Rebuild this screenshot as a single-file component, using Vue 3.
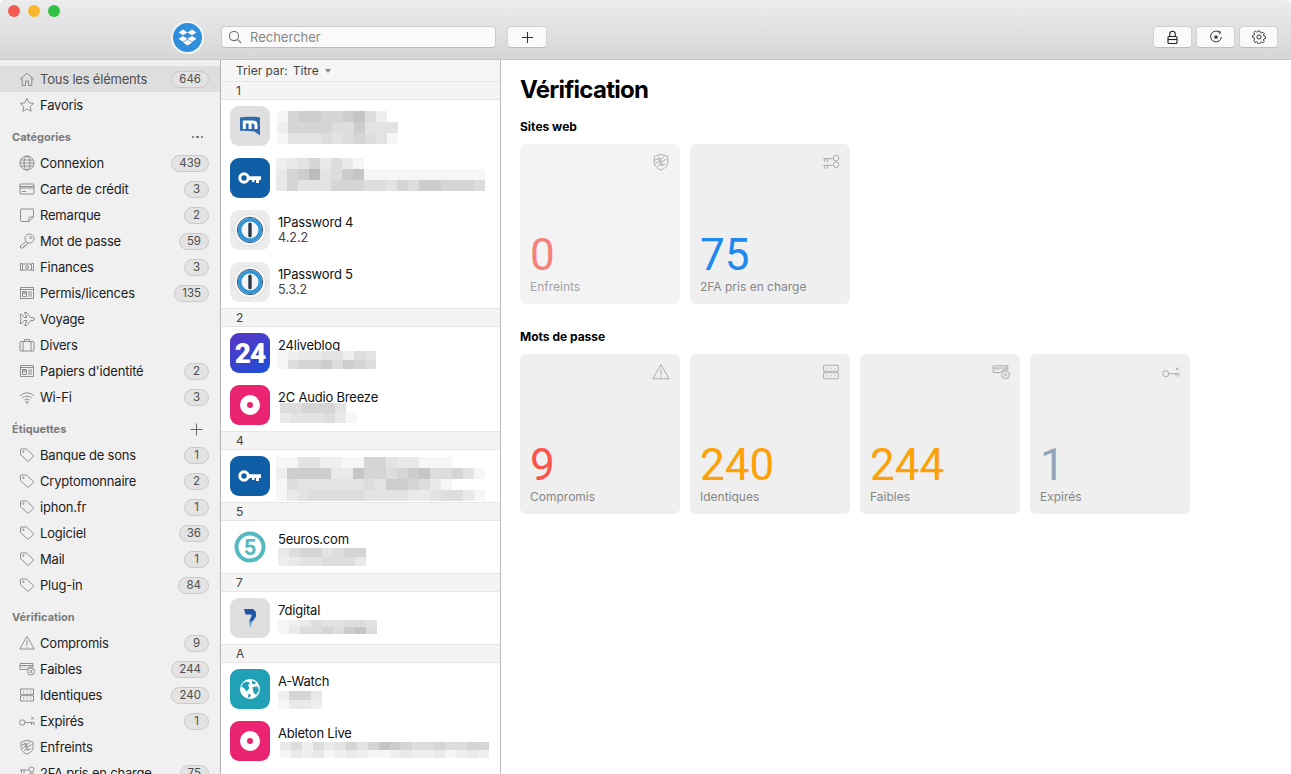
<template>
  <div class="window">
    <!-- Barre d'outils -->
    <header class="toolbar">
      <div class="lights">
        <span class="light light--red"></span>
        <span class="light light--yellow"></span>
        <span class="light light--green"></span>
      </div>
      <div class="controls">
        <div class="vault">
          <svg width="19" height="17" viewBox="0 0 19 17" fill="#fff">
            <path d="M5 0.5 9.5 3.4 5 6.3 0.5 3.4zM14 0.5 18.5 3.4 14 6.3 9.5 3.4zM5 6.9 9.5 9.8 5 12.7 0.5 9.8zM14 6.9 18.5 9.8 14 12.7 9.5 9.8zM5 13.6 9.5 10.8 14 13.6 9.5 16.5z" />
          </svg>
        </div>
        <div class="search">
          <svg width="14" height="14" viewBox="0 0 14 14" fill="none" stroke="#777" stroke-width="1.1">
            <circle cx="6" cy="6" r="4.6" />
            <path d="M9.4 9.4 13 13" />
          </svg>
          <span>Rechercher</span>
        </div>
        <button class="tool-btn tool-btn--add">
          <svg width="13" height="13" viewBox="0 0 13 13" stroke="#333" stroke-width="1.1"><path d="M6.5 1v11M1 6.5h11" /></svg>
        </button>
        <div class="spacer"></div>
        <button class="tool-btn">
          <svg width="13" height="14" viewBox="0 0 13 14" fill="none" stroke="#222" stroke-width="1.1">
            <rect x="2" y="6.5" width="9" height="7" rx="1" />
            <path d="M3.8 6.5V4a2.7 2.7 0 0 1 5.4 0v2.5" />
            <path d="M2 9.5h9" />
          </svg>
        </button>
        <button class="tool-btn">
          <svg width="14" height="14" viewBox="0 0 14 14" fill="none" stroke="#333" stroke-width="1">
            <path d="M10.8 2.6A5.4 5.4 0 1 0 12.4 7" />
            <path d="M9.6 1 11.6 2.2 10.2 4.2" />
            <path d="M7 4.4 7.8 6.2 9.6 6.3 8.2 7.5 8.7 9.3 7 8.3 5.3 9.3 5.8 7.5 4.4 6.3 6.2 6.2z" fill="#333" stroke="none" />
          </svg>
        </button>
        <button class="tool-btn">
          <svg width="14" height="14" viewBox="0 0 14 14" fill="none" stroke="#333" stroke-width="1">
            <circle cx="7" cy="7" r="2.1" />
            <path d="M5.9 1h2.2l.4 1.7 1.2.5 1.5-.9 1.5 1.5-.9 1.5.5 1.2 1.7.4v2.2l-1.7.4-.5 1.2.9 1.5-1.5 1.5-1.5-.9-1.2.5-.4 1.7H5.9l-.4-1.7-1.2-.5-1.5.9L1.3 11l.9-1.5-.5-1.2L0 7.9V5.7l1.7-.4.5-1.2-.9-1.5 1.5-1.5 1.5.9 1.2-.5z" transform="translate(.6 .1) scale(.92)" />
          </svg>
        </button>
      </div>
    </header>

    <div class="main">
      <!-- Barre latérale -->
      <aside class="sidebar">
        <section v-for="section in sidebar" :key="section.title" class="side-section">
          <div v-if="section.title !== 'top'" class="side-title">
            <span>{{ section.title }}</span>
            <span v-if="section.action === 'dots'" class="side-dots">
              <i></i><i></i><i></i>
            </span>
            <svg v-if="section.action === 'plus'" width="13" height="13" viewBox="0 0 13 13" stroke="#666" stroke-width="1"><path d="M6.5 0.5v12M0.5 6.5h12" /></svg>
          </div>
          <div
            v-for="row in section.rows"
            :key="row.label"
            class="side-row"
            :class="{ 'side-row--active': row.active }"
          >
            <svg class="side-icon" width="16" height="16" viewBox="0 0 16 16" fill="none" stroke="#7d7d7d" stroke-width="0.85" stroke-linejoin="round">
              <path v-for="d in icons[row.icon]" :key="d" :d="d" />
            </svg>
            <span class="side-label">{{ row.label }}</span>
            <span v-if="row.count" class="side-badge">{{ row.count }}</span>
          </div>
        </section>
      </aside>

      <!-- Liste des éléments -->
      <div class="list">
        <div class="sort">
          <span>Trier par:</span>
          <span class="sort-value">Titre</span>
          <i class="sort-caret"></i>
        </div>
        <template v-for="group in groups" :key="group.letter">
          <div class="group-head">{{ group.letter }}</div>
          <div v-for="(item, idx) in group.items" :key="idx" class="item">
            <div class="app-icon" :class="'app-icon--' + item.icon">
              <svg v-if="item.icon === 'mail'" width="22" height="22" viewBox="0 0 22 22">
                <path d="M1 2.500C7 1.500 15 1.500 21 2.500V20.500L15.500 16.500C11 16 6 15.800 1 15.800z" fill="#2f69ae" />
                <path d="M5.300 14V7H13.500C15.500 7 17 8.200 17 10V14M11.100 7V14" fill="none" stroke="#fff" stroke-width="3" />
              </svg>
              <svg v-else-if="item.icon === 'key'" width="24" height="14" viewBox="0 0 24 14">
                <circle cx="6" cy="7" r="4.200" fill="none" stroke="#fff" stroke-width="3" />
                <path d="M10 5.300H23V9H21V12H18V9H16.500V11H14V9H10z" fill="#fff" />
              </svg>
              <svg v-else-if="item.icon === 'onepass'" width="40" height="40" viewBox="0 0 40 40">
                <path d="M0 20H40" stroke="#d8d8d8" stroke-width="1" />
                <circle cx="20" cy="20" r="16" fill="#f8f8f8" stroke="#d4d4d4" stroke-width="0.800" />
                <circle cx="20" cy="20" r="12.700" fill="none" stroke="#3b5269" stroke-width="1" />
                <circle cx="20" cy="20" r="10.300" fill="#f4f4f4" stroke="#2f96d8" stroke-width="3.600" />
                <rect x="18.300" y="12.500" width="3.400" height="15" rx="1.700" fill="#2b3a47" />
              </svg>
              <span v-else-if="item.icon === 'num'">24</span>
              <span v-else-if="item.icon === 'disc'" class="disc"></span>
              <svg v-else-if="item.icon === 'five'" width="36" height="36" viewBox="0 0 36 36">
                <circle cx="18" cy="18" r="13.500" fill="none" stroke="#55b9c2" stroke-width="4" />
                <text x="18" y="25.500" text-anchor="middle" font-family="Roboto, sans-serif" font-weight="700" font-size="22" fill="#55b9c2">5</text>
              </svg>
              <svg v-else-if="item.icon === 'seven'" width="14" height="20" viewBox="0 0 14 20">
                <path d="M1 1H10L13 4V8.500L9.500 13.500H6L8.500 8V6.500H2.500z" fill="#1f56a8" />
                <path d="M6 13.500H9.500L7 19.500z" fill="#5ba4d8" />
              </svg>
              <svg v-else-if="item.icon === 'globe'" width="22" height="22" viewBox="0 0 22 22">
                <circle cx="11" cy="11" r="10" fill="#fff" />
                <path d="M4 5 8 3.500 11 5 9 7.500 10.500 10 7.500 13.500 5 10 2.500 8.500zM13 2.500 17 4.500 15.500 6.500 13 5.500zM13.500 9 18.500 8.500 20 12 17 17 14.500 14.500zM9.500 15.500 12 17 10.500 20 9 19z" fill="#22a0b5" />
              </svg>
            </div>
            <div class="item-text">
              <div v-if="item.title" class="item-title">{{ item.title }}</div>
              <div v-if="item.sub" class="item-sub">{{ item.sub }}</div>
              <div
                v-if="item.blur"
                class="blur"
                :style="{ marginLeft: item.bx + 'px', marginTop: item.by + 'px' }"
              >
                <div
                  v-for="(line, i) in item.blur"
                  :key="i"
                  class="blur-row"
                  :style="{ height: (item.bh || 11) + 'px' }"
                >
                  <span
                    v-for="(c, j) in line"
                    :key="j"
                    class="blur-cell"
                    :style="{ background: shade(c) }"
                  ></span>
                </div>
              </div>
            </div>
          </div>
        </template>
      </div>

      <!-- Vérification -->
      <main class="detail">
        <h1>Vérification</h1>
        <div v-for="block in blocks" :key="block.title" class="block">
          <h2>{{ block.title }}</h2>
          <div class="cards">
            <div
              v-for="card in block.cards"
              :key="card.label"
              class="card"
              :class="{ 'card--empty': card.empty }"
            >
              <svg class="card-icon" width="18" height="18" viewBox="0 0 16 16" fill="none" stroke="#a4a4a4" stroke-width="0.8" stroke-linejoin="round">
                <path v-for="d in icons[card.icon]" :key="d" :d="d" />
              </svg>
              <div class="card-num" :style="{ color: card.color }">{{ card.num }}</div>
              <div class="card-label">{{ card.label }}</div>
            </div>
          </div>
        </div>
      </main>
    </div>
  </div>
</template>

<script setup>
const icons = {
  home: ['M1 8.500 8 2l7 6.500', 'M3.200 6.800V14.500H6.500V10H9.500V14.500H12.800V6.800'],
  star: ['M8 1.500l2 4.300 4.600.6-3.400 3.200.9 4.700L8 12l-4.100 2.300.9-4.700L1.400 6.400 6 5.800z'],
  globe: ['M15 8A7 7 0 1 1 1 8 7 7 0 1 1 15 8z', 'M11 8A3 7 0 1 1 5 8 3 7 0 1 1 11 8z', 'M1.800 5H14.200', 'M1.800 11H14.200', 'M1 8H15'],
  card: ['M2 3H14Q15 3 15 4V12Q15 13 14 13H2Q1 13 1 12V4Q1 3 2 3z', 'M1 5.500H15', 'M1 7H15', 'M3 10.500H7'],
  note: ['M2.500 2H13.500Q14.500 2 14.500 3V10L10 14.500H2.500Q1.500 14.500 1.500 13.500V3Q1.500 2 2.500 2z', 'M14.500 10H11Q10 10 10 11V14.500'],
  key: ['M15 5.500A4.500 4.500 0 1 1 6 5.500 4.500 4.500 0 1 1 15 5.500z', 'M7 8.500 1.500 13V15H4L4.500 13.500H6L6 12H7.500L9 10', 'M12.600 4.500A1 1 0 1 1 10.600 4.500 1 1 0 1 1 12.600 4.500z'],
  money: ['M3.500 4.500H1.500V11.500H3.500', 'M12.500 4.500H14.500V11.500H12.500', 'M3.500 5H12.500V11H3.500z', 'M9.500 8A1.500 1.500 0 1 1 6.500 8 1.500 1.500 0 1 1 9.500 8z'],
  id: ['M1.500 2.500H14.500V13.500H1.500z', 'M1.500 4.500H14.500', 'M3.500 6.500H7.500V11.500H3.500z', 'M4.500 8a1 1 0 1 1 2 0 1 1 0 1 1-2 0', 'M9 7H13M9 9H13M9 11H13'],
  plane: ['M1 3.500H3L5 6.500H8L5.500 1.500H7.500L11.500 6.500H14Q15.500 7 15.500 8T14 9.500H11.500L7.500 14.500H5.500L8 9.500H5L3 12.500H1L2 8z'],
  case: ['M2 4.500H14Q15 4.500 15 5.500V13Q15 14 14 14H2Q1 14 1 13V5.500Q1 4.500 2 4.500z', 'M5.500 4.500V2.500H10.500V4.500', 'M4 4.500V14M12 4.500V14'],
  wifi: ['M1 6.800C5 3 11 3 15 6.800', 'M3.200 9C6 6.600 10 6.600 12.800 9', 'M5.400 11C7 9.800 9 9.800 10.600 11', 'M9 13.200A1 1 0 1 1 7 13.200 1 1 0 1 1 9 13.200z'],
  tag: ['M1.500 2.500Q1.500 2 2.500 2H7.500L14.500 8.500Q15 9 14.500 9.500L9.500 14Q9 14.500 8.500 14L1.500 7.500z', 'M5 4.700A.7 .7 0 1 1 3.600 4.700 .7 .7 0 1 1 5 4.700z'],
  warn: ['M8 1.500 15.300 14H.7z', 'M8 5.500V10.500', 'M8 11.800V12.800'],
  weak: ['M1 2.500H14V6H10A4 4 0 0 0 7.500 8.500H1z', 'M1 4.500H14', 'M3 5.800H3.800M5 5.800H5.800', 'M15.500 10.500A3.500 3.500 0 1 1 8.500 10.500 3.500 3.500 0 1 1 15.500 10.500z', 'M10.700 9 13.300 12M13.300 9 10.700 12'],
  same: ['M1.500 2H14.500V7.300H1.500z', 'M1.500 8.700H14.500V14H1.500z', 'M4 4.700H5M7.500 4.700H8.500M11 4.700H12M4 11.400H5M7.500 11.400H8.500M11 11.400H12'],
  expired: ['M6 9.500A2.700 2.700 0 1 1 .6 9.500 2.700 2.700 0 1 1 6 9.500z', 'M6 9.500H15V12M12.500 9.500V12', 'M12.300 4 14.800 6.500M14.800 4 12.300 6.500'],
  shield: ['M8 1.200 14 3.200V8.500C14 11.500 11 14 8 15 5 14 2 11.500 2 8.500V3.200z', 'M2.500 6.500 7 4 6 6.500 10.500 3.500', 'M3 9.500 8 6.500 7 9 12.500 5.500', 'M5 11.500 9 9.500 8.500 11.500 12 9.500'],
  twofa: ['M1 5H9.500M2.500 5V8M5 5V8', 'M1 11H9.500M2.500 11V14M5 11V14', 'M15 4.500A2.500 2.500 0 1 1 10 4.500 2.500 2.500 0 1 1 15 4.500z', 'M15 10.500A2.500 2.500 0 1 1 10 10.500 2.500 2.500 0 1 1 15 10.500z']
}

const sidebar = [
  {
    title: 'top',
    rows: [
      { icon: 'home', label: 'Tous les éléments', count: 646, active: true },
      { icon: 'star', label: 'Favoris' }
    ]
  },
  {
    title: 'Catégories',
    action: 'dots',
    rows: [
      { icon: 'globe', label: 'Connexion', count: 439 },
      { icon: 'card', label: 'Carte de crédit', count: 3 },
      { icon: 'note', label: 'Remarque', count: 2 },
      { icon: 'key', label: 'Mot de passe', count: 59 },
      { icon: 'money', label: 'Finances', count: 3 },
      { icon: 'id', label: 'Permis/licences', count: 135 },
      { icon: 'plane', label: 'Voyage' },
      { icon: 'case', label: 'Divers' },
      { icon: 'id', label: "Papiers d'identité", count: 2 },
      { icon: 'wifi', label: 'Wi-Fi', count: 3 }
    ]
  },
  {
    title: 'Étiquettes',
    action: 'plus',
    rows: [
      { icon: 'tag', label: 'Banque de sons', count: 1 },
      { icon: 'tag', label: 'Cryptomonnaire', count: 2 },
      { icon: 'tag', label: 'iphon.fr', count: 1 },
      { icon: 'tag', label: 'Logiciel', count: 36 },
      { icon: 'tag', label: 'Mail', count: 1 },
      { icon: 'tag', label: 'Plug-in', count: 84 }
    ]
  },
  {
    title: 'Vérification',
    rows: [
      { icon: 'warn', label: 'Compromis', count: 9 },
      { icon: 'weak', label: 'Faibles', count: 244 },
      { icon: 'same', label: 'Identiques', count: 240 },
      { icon: 'expired', label: 'Expirés', count: 1 },
      { icon: 'shield', label: 'Enfreints' },
      { icon: 'twofa', label: '2FA pris en charge', count: 75 }
    ]
  }
]

const groups = [
  {
    letter: '1',
    items: [
      { icon: 'mail', bx: -1, by: 1, blur: ['1677667852', '26666557444', '14445456541'] },
      { icon: 'key', bx: -2, by: -4, blur: ['23463531', '3679457811111111111', '3644466655465776665'] },
      { icon: 'onepass', title: '1Password 4', sub: '4.2.2' },
      { icon: 'onepass', title: '1Password 5', sub: '5.3.2' }
    ]
  },
  {
    letter: '2',
    items: [
      { icon: 'num', title: '24liveblog', bx: -1, by: -2, bh: 9, blur: ['123344254', '156675765'] },
      { icon: 'disc', title: '2C Audio Breeze', bx: 2, by: -2, bh: 10, blur: ['556664', '3444531'] }
    ]
  },
  {
    letter: '4',
    items: [
      { icon: 'key', bx: -2, by: -3, blur: ['1144221166433111', '2777733866567855641', '1544444454776531', '1345555544443345531'] }
    ]
  },
  {
    letter: '5',
    items: [{ icon: 'five', title: '5euros.com', bx: 0, by: 1, bh: 9, blur: ['35664566', '23445553'] }]
  },
  {
    letter: '7',
    items: [{ icon: 'seven', title: '7digital', bx: 0, by: 2, bh: 7, blur: ['123544554', '135565785'] }]
  },
  {
    letter: 'A',
    items: [
      { icon: 'globe', title: 'A-Watch', bx: 0, by: 2, bh: 9, blur: ['2663', '1332'] },
      { icon: 'disc', title: 'Ableton Live', bx: 2, by: 1, bh: 8, blur: ['3525346468765565566', '1323123211232231232'] }
    ]
  }
]

const blocks = [
  {
    title: 'Sites web',
    cards: [
      { icon: 'shield', num: 0, label: 'Enfreints', color: '#f5827a', empty: true },
      { icon: 'twofa', num: 75, label: '2FA pris en charge', color: '#2089f0' }
    ]
  },
  {
    title: 'Mots de passe',
    cards: [
      { icon: 'warn', num: 9, label: 'Compromis', color: '#f9554b' },
      { icon: 'same', num: 240, label: 'Identiques', color: '#fda106' },
      { icon: 'weak', num: 244, label: 'Faibles', color: '#fda106' },
      { icon: 'expired', num: 1, label: 'Expirés', color: '#94a5bb' }
    ]
  }
]

const shades = ['transparent', '#f6f6f6', '#efefef', '#e9e9e9', '#e3e3e3', '#dddddd', '#d5d5d5', '#cdcdcd', '#c5c5c5', '#bcbcbc']
const shade = c => shades[Number(c)]
</script>

<style>
html,
body {
  margin: 0;
  background: #fff;
}
</style>

<style scoped>
.window {
  width: 1291px;
  height: 774px;
  overflow: hidden;
  display: flex;
  flex-direction: column;
  font-family: Inter, "Liberation Sans", sans-serif;
  font-size: 13px;
  color: #1d1d1d;
}
.toolbar {
  flex: 0 0 60px;
  box-sizing: border-box;
  background: linear-gradient(#ececec, #d6d6d6);
  border-bottom: 1px solid #c6c6c6;
  border-radius: 5px 5px 0 0;
}
.lights {
  display: flex;
  gap: 8px;
  padding: 5px 0 0 8px;
}
.light {
  width: 12px;
  height: 12px;
  border-radius: 50%;
}
.light--red { background: #f25a52; }
.light--yellow { background: #f8b62c; }
.light--green { background: #2fc244; }
.controls {
  display: flex;
  align-items: center;
  height: 22px;
  margin-top: 9px;
  padding: 0 13px 0 171px;
}
.vault {
  flex: 0 0 auto;
  width: 33px;
  height: 33px;
  box-sizing: border-box;
  border: 2px solid #f4f4f4;
  border-radius: 50%;
  background: #2f8fdc;
  display: flex;
  align-items: center;
  justify-content: center;
  margin-right: 17px;
}
.search {
  width: 275px;
  height: 22px;
  box-sizing: border-box;
  display: flex;
  align-items: center;
  gap: 8px;
  padding-left: 6px;
  background: #fafafa;
  border: 1px solid #cbcbcb;
  border-bottom-color: #bdbdbd;
  border-radius: 4px;
  color: #868686;
}
.tool-btn {
  width: 39px;
  height: 22px;
  box-sizing: border-box;
  padding: 0;
  margin-left: 4px;
  border: 1px solid #d2d2d2;
  border-bottom-color: #bdbdbd;
  border-radius: 4px;
  background: #fafafa;
  display: flex;
  align-items: center;
  justify-content: center;
}
.tool-btn--add {
  margin-left: 11px;
  width: 40px;
}
.spacer {
  flex: 1;
}
.main {
  flex: 1;
  min-height: 0;
  display: flex;
}
.sidebar {
  flex: 0 0 221px;
  box-sizing: border-box;
  padding-top: 6px;
  background: #f0f0f0;
  border-right: 1px solid #b4b4b4;
  overflow: hidden;
}
.side-section + .side-section {
  margin-top: 6px;
}
.side-title {
  height: 26px;
  display: flex;
  align-items: center;
  justify-content: space-between;
  padding: 0 17px 0 12px;
  font-size: 11px;
  font-weight: 700;
  color: #7b7b7b;
}
.side-dots {
  display: flex;
  gap: 2px;
}
.side-dots i {
  width: 2.500px;
  height: 2.500px;
  border-radius: 50%;
  background: #666;
}
.side-row {
  height: 26px;
  display: flex;
  align-items: center;
  padding: 0 11px 0 19px;
}
.side-row--active {
  background: #dedede;
  color: #505050;
}
.side-icon {
  flex: 0 0 16px;
  margin-right: 5px;
}
.side-label {
  flex: 1;
  white-space: nowrap;
  letter-spacing: -0.2px;
}
.side-badge {
  min-width: 9px;
  height: 15px;
  line-height: 15px;
  padding: 0 7px;
  text-align: center;
  font-size: 11.500px;
  color: #4e4e4e;
  background: #e3e3e3;
  border: 1px solid #c9c9c9;
  border-radius: 9px;
}
.list {
  flex: 0 0 280px;
  box-sizing: border-box;
  border-right: 1px solid #bcbcbc;
  overflow: hidden;
  background: #fff;
}
.sort {
  height: 21px;
  box-sizing: border-box;
  display: flex;
  align-items: center;
  padding-left: 15px;
  font-size: 12px;
  color: #444;
  background: #f5f5f5;
}
.sort-value {
  margin-left: 5px;
}
.sort-caret {
  margin-left: 6px;
  border: 3px solid transparent;
  border-top: 4px solid #8a8a8a;
  border-bottom: none;
}
.group-head {
  height: 19px;
  line-height: 18px;
  box-sizing: border-box;
  padding-left: 15px;
  font-size: 12px;
  color: #444;
  background: #f4f4f4;
  border-top: 1px solid #e6e6e6;
  border-bottom: 1px solid #e6e6e6;
}
.item {
  height: 52px;
  box-sizing: border-box;
  display: flex;
  padding: 6px 0 0 9px;
}
.app-icon {
  flex: 0 0 40px;
  height: 40px;
  border-radius: 9px;
  display: flex;
  align-items: center;
  justify-content: center;
  overflow: hidden;
}
.app-icon--mail { background: #dfdfdf; }
.app-icon--key { background: #0f5ea6; }
.app-icon--onepass { background: #ececec; }
.app-icon--num {
  background: linear-gradient(150deg, #5a35c4, #1c4fd6);
  color: #fff;
  font-family: Roboto, sans-serif;
  font-size: 28px;
  font-weight: 900;
  letter-spacing: -1px;
}
.app-icon--disc { background: #ea2470; }
.app-icon--five { background: #fff; }
.app-icon--seven { background: #dedede; }
.app-icon--globe { background: #22a0b5; }
.disc {
  width: 6px;
  height: 6px;
  border: 7px solid #fff;
  border-radius: 50%;
  background: #ea2470;
}
.item-text {
  margin-left: 8px;
  padding-top: 4px;
  flex: 1;
  min-width: 0;
}
.item-title {
  line-height: 16px;
  color: #111;
  white-space: nowrap;
  letter-spacing: -0.2px;
}
.item-sub {
  line-height: 16px;
  font-size: 12.500px;
  color: #444;
}
.blur {
  position: relative;
  background: #fff;
}
.blur-row {
  display: flex;
}
.blur-cell {
  flex: 0 0 11px;
  height: 100%;
}
.detail {
  flex: 1;
  min-width: 0;
  box-sizing: border-box;
  padding: 15px 0 0 19px;
  background: #fff;
}
h1 {
  margin: 0;
  font-size: 24px;
  line-height: 30px;
  font-weight: 700;
  letter-spacing: -0.7px;
  color: #000;
}
h2 {
  margin: 0 0 9px;
  font-size: 12px;
  line-height: 16px;
  font-weight: 700;
  color: #000;
}
.block {
  margin-top: 25px;
}
.block:first-of-type {
  margin-top: 14px;
}
.cards {
  display: flex;
  gap: 10px;
}
.card {
  width: 160px;
  height: 160px;
  box-sizing: border-box;
  padding: 9px 10px 9px;
  border-radius: 6px;
  background: #efefef;
  display: flex;
  flex-direction: column;
}
.card--empty {
  background: #f3f3f3;
}
.card-icon {
  align-self: flex-end;
}
.card-num {
  margin-top: auto;
  font-family: Roboto, sans-serif;
  font-size: 44px;
  line-height: 50px;
}
.card-label {
  margin-top: -1px;
  font-size: 12px;
  line-height: 16px;
  color: #868686;
}
.card--empty .card-label {
  color: #a4a4a4;
}
</style>
